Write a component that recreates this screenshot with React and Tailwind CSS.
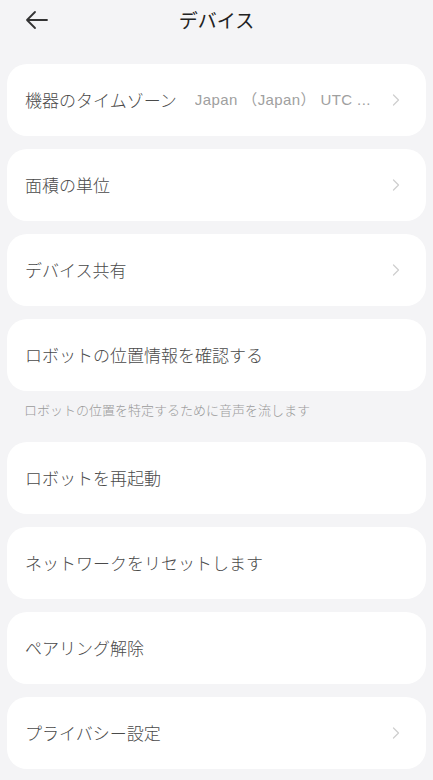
import { ChevronRight } from "lucide-react";

const font = { fontFamily: '"Noto Sans CJK JP", "Noto Sans", sans-serif' };

const Row = ({ label, value, chevron }) => (
  <div className="flex h-[72px] items-center rounded-[20px] bg-white pl-[18px] pr-[20px]">
    <span className="text-[17px] font-light text-[#4a4a4a] whitespace-nowrap">{label}</span>
    {value && (
      <span className="ml-[18px] flex-1 truncate font-['Liberation_Sans','Noto_Sans_CJK_JP',sans-serif] text-[15px] tracking-[0.4px] text-[#a0a0a0]">
        {value}
      </span>
    )}
    {!value && <div className="flex-1" />}
    {chevron && (
      <ChevronRight className="ml-2 h-[20px] w-[20px] shrink-0 text-[#cfcfcf]" strokeWidth={1.5} />
    )}
  </div>
);

export default function App() {
  return (
    <div className="min-h-[780px] w-[433px] bg-[#f4f4f6]" style={font}>
      <header className="relative flex h-[40px] items-center justify-center">
        <svg
          className="absolute left-[25px] top-[10px]"
          width="24"
          height="20"
          viewBox="0 0 24 20"
          fill="none"
          stroke="#333"
          strokeWidth="1.8"
          strokeLinecap="round"
          strokeLinejoin="round"
        >
          <path d="M22 10H2M10 2L2 10l8 8" />
        </svg>
        <h1 className="text-[19px] text-[#222]">デバイス</h1>
      </header>

      <div className="flex flex-col gap-[13px] px-[7px] pt-[24px]">
        <Row label="機器のタイムゾーン" value="Japan （Japan） UTC ..." chevron />
        <Row label="面積の単位" chevron />
        <Row label="デバイス共有" chevron />
        <Row label="ロボットの位置情報を確認する" />
      </div>
      <p className="px-[24px] pt-[9px] pb-[22px] text-[13px] font-light text-[#9a9a9a]">
        ロボットの位置を特定するために音声を流します
      </p>
      <div className="flex flex-col gap-[13px] px-[7px]">
        <Row label="ロボットを再起動" />
        <Row label="ネットワークをリセットします" />
        <Row label="ペアリング解除" />
        <Row label="プライバシー設定" chevron />
      </div>
    </div>
  );
}
